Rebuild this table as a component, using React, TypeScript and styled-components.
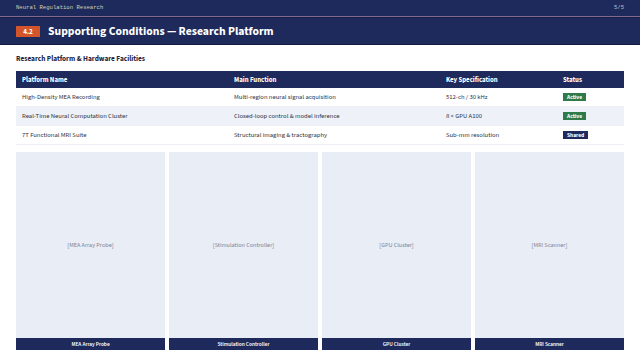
import React from "react";
import styled, { createGlobalStyle } from "styled-components";

const NAVY = "#1f2a5c";

const Global = createGlobalStyle`
  html, body { margin: 0; padding: 0; background: #ffffff; }
  body { width: 640px; height: 360px; overflow: hidden; font-family: "Source Sans 3", "Lato", "Noto Sans", sans-serif; }
  * { box-sizing: border-box; }
`;

const Page = styled.div`
  width: 640px;
  height: 360px;
  display: flex;
  flex-direction: column;
  background: #ffffff;
`;

const TopBar = styled.header`
  height: 17px;
  background: ${NAVY};
  padding: 0 16px 1px;
  display: flex;
  align-items: center;
  justify-content: space-between;
  border-bottom: 1px solid #86688a;
  font-family: "Liberation Mono", "DejaVu Sans Mono", monospace;
  font-size: 5.6px;
  color: #d8cfb0;
`;

const PageNum = styled.span`
  color: #b9c0d8;
`;

const TitleBand = styled.div`
  height: 28px;
  background: ${NAVY};
  padding: 1px 16px 0;
  display: flex;
  align-items: center;
  gap: 8px;
  border-bottom: 1px solid #131a40;
  border-top: 1px solid #161f4a;
`;

const SectionBadge = styled.span`
  background: #d4552b;
  color: #ffffff;
  font-weight: 700;
  font-size: 7px;
  height: 11px;
  width: 24px;
  display: flex;
  align-items: center;
  justify-content: center;
`;

const Title = styled.h1`
  margin: 0;
  color: #ffffff;
  font-weight: 700;
  font-size: 11.7px;
`;

const Content = styled.main`
  flex: 1;
  display: flex;
  flex-direction: column;
  padding: 10px 16px 10px;
  min-height: 0;
`;

const SubHeading = styled.h2`
  margin: 0 0 7px;
  font-size: 7.3px;
  font-weight: 700;
  color: #1e2540;
  line-height: 9px;
`;

const Table = styled.div`
  display: grid;
  grid-template-columns: 212px 212px 117px 1fr;
`;

const HeadCell = styled.div`
  background: ${NAVY};
  color: #ffffff;
  font-weight: 700;
  font-size: 6.8px;
  height: 17px;
  display: flex;
  align-items: center;
  padding: 0 6px;
`;

const Cell = styled.div<{ $alt?: boolean }>`
  background: ${(p) => (p.$alt ? "#eef1f7" : "#ffffff")};
  color: #2b3142;
  font-size: 6.6px;
  height: 19px;
  display: flex;
  align-items: center;
  padding: 0 6px;
  border-bottom: 1px solid #eceff5;
`;

const Status = styled.span<{ $tone: "green" | "navy" }>`
  background: ${(p) => (p.$tone === "green" ? "#2e7a48" : NAVY)};
  color: #ffffff;
  font-weight: 700;
  font-size: 5.5px;
  height: 8px;
  padding: 0 4px;
  display: inline-flex;
  align-items: center;
`;

const Gallery = styled.div`
  flex: 1;
  margin-top: 7px;
  display: grid;
  grid-template-columns: repeat(4, 1fr);
  gap: 4px;
  min-height: 0;
`;

const Card = styled.div`
  display: flex;
  flex-direction: column;
  background: #e9edf5;
`;

const Placeholder = styled.div`
  flex: 1;
  display: flex;
  align-items: center;
  justify-content: center;
  font-size: 6.2px;
  color: #7c8294;
`;

const Caption = styled.div`
  height: 12px;
  background: ${NAVY};
  color: #ffffff;
  font-size: 5.4px;
  font-weight: 600;
  display: flex;
  align-items: center;
  justify-content: center;
`;

const rows = [
  { name: "High-Density MEA Recording", fn: "Multi-region neural signal acquisition", spec: "512-ch / 30 kHz", status: "Active", tone: "green" as const },
  { name: "Real-Time Neural Computation Cluster", fn: "Closed-loop control & model inference", spec: "8 × GPU A100", status: "Active", tone: "green" as const },
  { name: "7T Functional MRI Suite", fn: "Structural imaging & tractography", spec: "Sub-mm resolution", status: "Shared", tone: "navy" as const },
];

const cards = ["MEA Array Probe", "Stimulation Controller", "GPU Cluster", "MRI Scanner"];

export default function App() {
  return (
    <>
      <Global />
      <Page>
        <TopBar>
          <span>Neural Regulation Research</span>
          <PageNum>5/5</PageNum>
        </TopBar>
        <TitleBand>
          <SectionBadge>4.2</SectionBadge>
          <Title>Supporting Conditions — Research Platform</Title>
        </TitleBand>
        <Content>
          <SubHeading>Research Platform &amp; Hardware Facilities</SubHeading>
          <Table>
            <HeadCell>Platform Name</HeadCell>
            <HeadCell>Main Function</HeadCell>
            <HeadCell>Key Specification</HeadCell>
            <HeadCell>Status</HeadCell>
            {rows.map((r, i) => (
              <React.Fragment key={r.name}>
                <Cell $alt={i === 1}>{r.name}</Cell>
                <Cell $alt={i === 1}>{r.fn}</Cell>
                <Cell $alt={i === 1}>{r.spec}</Cell>
                <Cell $alt={i === 1}>
                  <Status $tone={r.tone}>{r.status}</Status>
                </Cell>
              </React.Fragment>
            ))}
          </Table>
          <Gallery>
            {cards.map((c) => (
              <Card key={c}>
                <Placeholder>[{c}]</Placeholder>
                <Caption>{c}</Caption>
              </Card>
            ))}
          </Gallery>
        </Content>
      </Page>
    </>
  );
}
